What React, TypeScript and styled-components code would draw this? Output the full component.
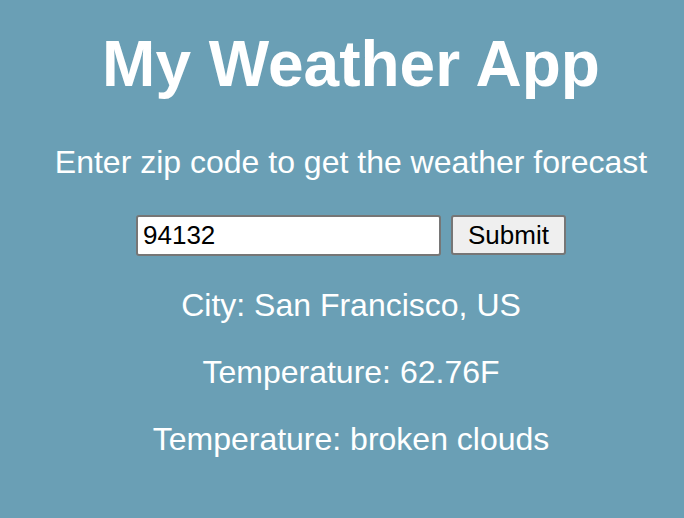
import React, { useState } from "react";
import styled, { createGlobalStyle } from "styled-components";

const GlobalStyle = createGlobalStyle`
  html, body {
    margin: 0;
    padding: 0;
    background: #6a9fb5;
    min-height: 100%;
  }
  body {
    font-family: "Liberation Sans", Arial, sans-serif;
  }
`;

const Page = styled.div`
  box-sizing: border-box;
  width: 684px;
  height: 518px;
  padding-left: 18px;
  background: #6a9fb5;
  color: #ffffff;
  display: flex;
  flex-direction: column;
  align-items: center;
  font-family: "Liberation Sans", Arial, sans-serif;
  overflow: hidden;
`;

const Title = styled.h1`
  margin: 27px 0 0;
  font-size: 64px;
  line-height: 74px;
  font-weight: 700;
  white-space: nowrap;
`;

const Subtitle = styled.p`
  margin: 43px 0 0;
  font-size: 32px;
  line-height: 37px;
  white-space: nowrap;
`;

const Form = styled.form`
  margin-top: 34px;
  display: flex;
  align-items: flex-start;
  gap: 10px;
`;

const ZipInput = styled.input`
  box-sizing: border-box;
  width: 305px;
  height: 41px;
  border: 2px solid #767676;
  border-radius: 3px;
  padding: 0 5px;
  font-family: "Liberation Sans", Arial, sans-serif;
  font-size: 26px;
  color: #000;
  background: #fff;
  outline: none;
`;

const SubmitButton = styled.button`
  box-sizing: border-box;
  width: 115px;
  height: 40px;
  border: 2px solid #767676;
  border-radius: 3px;
  background: #efefef;
  font-family: "Liberation Sans", Arial, sans-serif;
  font-size: 26px;
  color: #000;
  padding: 0;
`;

const Results = styled.div`
  margin-top: 31px;
  display: flex;
  flex-direction: column;
  align-items: center;
  gap: 30px;
`;

const ResultLine = styled.p`
  margin: 0;
  font-size: 32px;
  line-height: 37px;
  white-space: nowrap;
`;

export default function App() {
  const [zip, setZip] = useState("94132");
  return (
    <>
      <GlobalStyle />
      <Page>
        <Title>My Weather App</Title>
        <Subtitle>Enter zip code to get the weather forecast</Subtitle>
        <Form onSubmit={(e) => e.preventDefault()}>
          <ZipInput value={zip} onChange={(e) => setZip(e.target.value)} />
          <SubmitButton type="submit">Submit</SubmitButton>
        </Form>
        <Results>
          <ResultLine>City: San Francisco, US</ResultLine>
          <ResultLine>Temperature: 62.76F</ResultLine>
          <ResultLine>Temperature: broken clouds</ResultLine>
        </Results>
      </Page>
    </>
  );
}
